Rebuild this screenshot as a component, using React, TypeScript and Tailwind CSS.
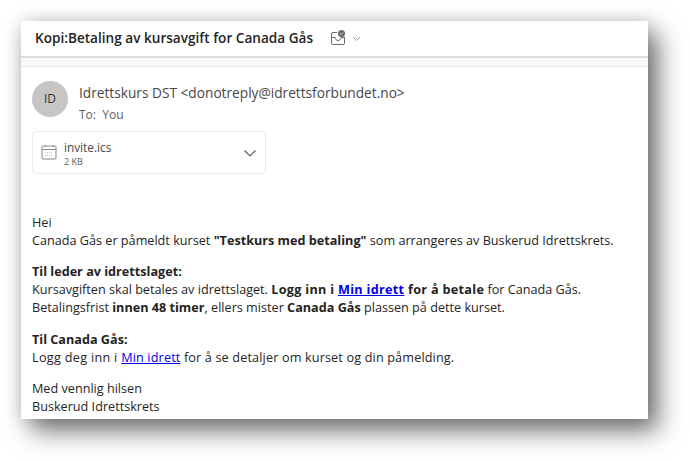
export default function App() {
  return (
    <div className="w-[690px] h-[461px] bg-white overflow-hidden pl-[21px] pt-[21px] font-['Open_Sans','Noto_Sans',sans-serif] text-[#252423] text-[12.65px]">
      <div className="w-[627px] h-[398px] bg-white shadow-[10px_12px_24px_rgba(0,0,0,0.55),0_0_16px_rgba(0,0,0,0.14)] flex flex-col overflow-hidden">
        <div className="h-[37px] shrink-0 flex items-center pl-[14px] border-b-2 border-[#dcdcdc]">
          <span className="text-[13.6px] font-semibold text-[#242424]">Kopi:Betaling av kursavgift for Canada Gås</span>
          <svg className="ml-[17px] mt-[-2px]" width="16" height="16" viewBox="0 0 16 16" fill="none">
            <path d="M7 2.500H3a1.500 1.500 0 0 0-1.500 1.500v9A1.500 1.500 0 0 0 3 14.500h10a1.500 1.500 0 0 0 1.500-1.500V7" stroke="#6b6a69" strokeWidth="1" />
            <path d="M1.500 7.500H5c.5 2 1.500 3 3 3s2.500-1 3-3h3.500" stroke="#6b6a69" strokeWidth="1" />
            <circle cx="11.500" cy="3.500" r="3.500" fill="#6b6a69" />
            <path d="M10 3.500l1 1 2-2" stroke="#fff" strokeWidth="0.8" />
          </svg>
          <svg className="ml-[6px]" width="9" height="9" viewBox="0 0 9 9" fill="none">
            <path d="M1 3l3.500 3.500L8 3" stroke="#8a8886" strokeWidth="0.8" />
          </svg>
        </div>
        <div className="h-[8px] shrink-0 bg-[#f8f8f8] border-b border-[#e8e8e8] box-content" />
        <div className="pl-[11px] flex-1">
          <div className="flex mt-[14px]">
            <div className="w-9 h-9 rounded-full bg-[#c8c6c4] flex items-center justify-center text-[12px] font-normal text-[#323130]">ID</div>
            <div className="ml-[11px]">
              <div className="text-[13.7px] leading-[18px] text-[#494847] mt-[3px]">Idrettskurs DST &lt;donotreply@idrettsforbundet.no&gt;</div>
              <div className="text-[12px] leading-[16px] text-[#605e5c] mt-[5px]">To:&nbsp; You</div>
            </div>
          </div>
          <div className="w-[234px] h-[43px] mt-[8px] rounded border border-[#edebe9] flex items-center pl-2 pr-[8px]">
            <svg className="mt-[-1px]" width="16" height="16" viewBox="0 0 16 16" fill="none">
              <rect x="1" y="2" width="14" height="13" rx="1" stroke="#8a8886" />
              <path d="M1 5.500h14M4 1v2M12 1v2" stroke="#8a8886" />
              <path d="M4 8.500h8M4 11.500h8" stroke="#c8c6c4" strokeDasharray="1 1" />
            </svg>
            <div className="ml-[7px] flex-1 mt-[1px]">
              <div className="text-[11.8px] leading-[16px] text-[#484644]">invite.ics</div>
              <div className="text-[9px] leading-[12px] text-[#605e5c] mt-[1px]">2 KB</div>
            </div>
            <svg width="14" height="14" viewBox="0 0 14 14" fill="none">
              <path d="M1.500 4.500L7 10l5.500-5.500" stroke="#605e5c" strokeWidth="1.200" />
            </svg>
          </div>
          <div className="mt-[39px] leading-[18px] text-[#252423]">
            <p>Hei</p>
            <p>Canada Gås er påmeldt kurset <b>"Testkurs med betaling"</b> som arrangeres av Buskerud Idrettskrets.</p>
            <p className="mt-[13px]"><b>Til leder av idrettslaget:</b></p>
            <p>Kursavgiften skal betales av idrettslaget. <b className="tracking-[0.3px]">Logg inn i <a className="text-[#0000ee] underline">Min idrett</a> for å betale</b> for Canada Gås.</p>
            <p>Betalingsfrist <b>innen 48 timer</b>, ellers mister <b>Canada Gås</b> plassen på dette kurset.</p>
            <p className="mt-[14px]"><b>Til Canada Gås:</b></p>
            <p className="tracking-[0.15px]"><span className="tracking-[0.3px]">Logg deg inn i </span><a className="text-[#0000ee] underline">Min idrett</a> for å se detaljer om kurset og din påmelding.</p>
            <p className="mt-[13px]">Med vennlig hilsen</p>
            <p>Buskerud Idrettskrets</p>
          </div>
        </div>
      </div>
    </div>
  );
}
